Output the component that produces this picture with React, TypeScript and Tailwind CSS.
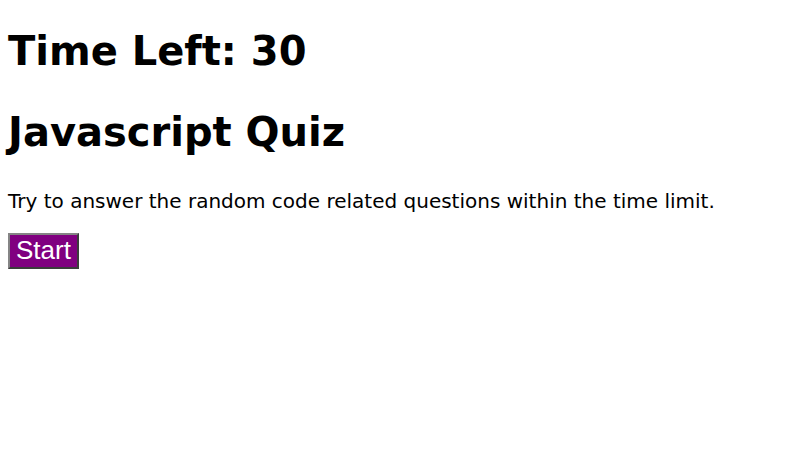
export default function App() {
  return (
    <div className="flex min-h-screen flex-col items-start bg-white px-2 pt-2 font-['DejaVu_Sans',sans-serif] text-black">
      <h1 className="mb-0 mt-[20px] text-[40px] font-bold leading-[1.164]">Time Left: 30</h1>
      <h1 className="mb-0 mt-[34px] text-[40px] font-bold leading-[1.164]">Javascript Quiz</h1>
      <p className="mb-0 mt-[35px] text-[20px] leading-[1.164]">
        Try to answer the random code related questions within the time limit.
      </p>
      <button
        type="button"
        className="mt-[20px] border-2 border-b-[#3c3c3c] border-l-[#858585] border-r-[#3c3c3c] border-t-[#858585] bg-[#800080] px-[6px] py-px font-['Liberation_Sans',Arial,sans-serif] text-[26px] leading-[1.15] text-white"
      >
        Start
      </button>
    </div>
  );
}
